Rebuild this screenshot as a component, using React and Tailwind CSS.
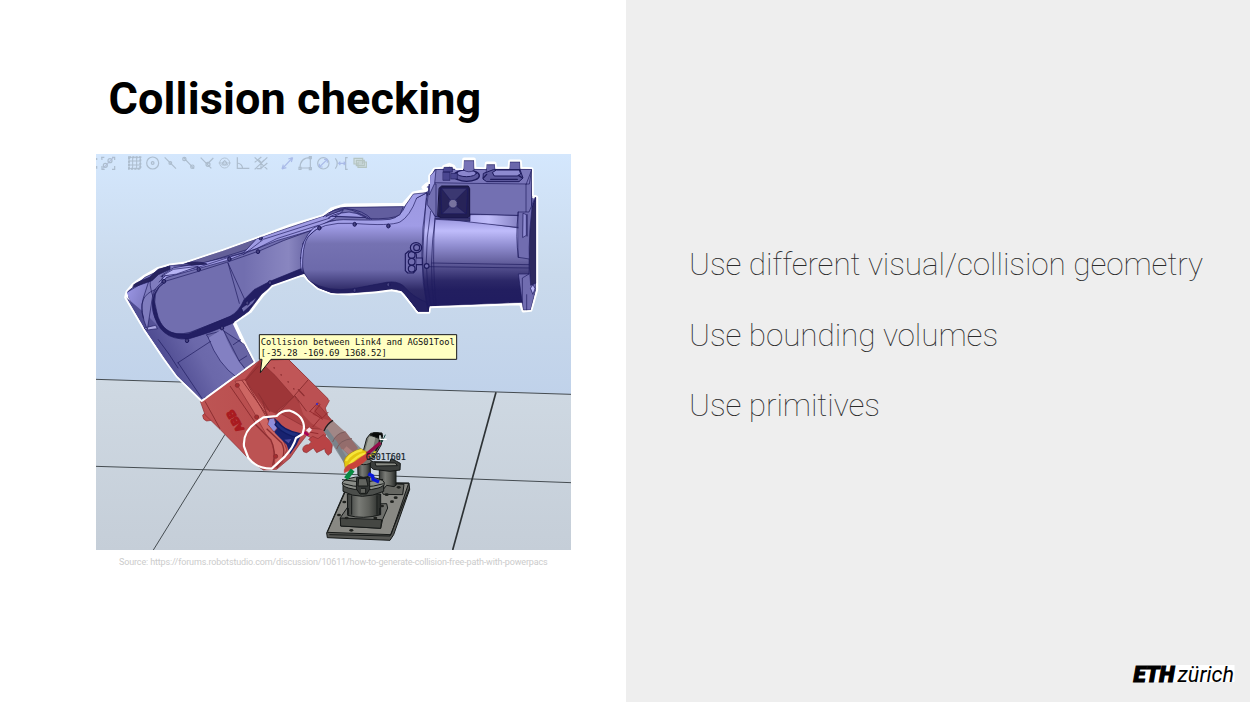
import React from "react";

const topics = [
  "Use different visual/collision geometry",
  "Use bounding volumes",
  "Use primitives",
];

const ARM =
  "M108 448 L112 432 L130 410 L165 385 L205 362 L240 352 L282 347 L400 308 L500 272 L600 234 L700 204 L724 184 L765 172 L940 170 L950 158 L970 136 L1005 128 L1010 124 L1000 118 L1012 108 L1020 108 L1020 84 L1034 64 L1060 62 L1062 56 L1078 50 L1090 55 L1096 66 L1120 66 L1122 34 L1152 34 L1154 62 L1188 64 L1190 46 L1214 46 L1216 62 L1258 62 L1260 40 L1290 40 L1292 62 L1325 63 L1326 144 L1339 148 L1339 425 L1322 486 L1300 488 L1292 466 L1018 475 L1016 492 L984 492 L974 478 L935 430 L905 424 L860 430 L780 437 L725 435 L685 420 L655 395 L641 378 L545 412 L518 440 L480 490 L432 522 L464 590 L491 642 L455 668 L335 756 L262 684 L222 630 L165 545 Z";

function Toolbar() {
  return (
    <g fill="none" stroke="#9dacbb" strokeWidth="3.5" opacity=".7">
      <path d="M20 30v6m0 18v8M36 36l-1-8h8M36 54v10h8M66 28h8v8M74 54v10h-8" />
      <path d="M38 62L70 29" stroke="#a9b3d2" />
      <circle cx="46" cy="52" r="6" /><circle cx="60" cy="38" r="6" />
      <path d="M117 28h34v34h-34zM128 28v34M140 28v34M117 39h34M117 51h34" strokeWidth="3" />
      <path d="M117 28h34v34h-34z" strokeWidth="6" strokeDasharray="6 4" />
      <circle cx="188" cy="45" r="18" /><circle cx="188" cy="45" r="4" />
      <path d="M224 28l34 34M280 28l32 34M332 29l32 32M352 48l18-18M442 28v33h36M442 45q14 2 16 16" />
      <circle cx="241" cy="45" r="4" /><circle cx="283" cy="33" r="5" /><circle cx="307" cy="56" r="5" /><circle cx="354" cy="49" r="6" />
      <g strokeWidth="2.5"><circle cx="404" cy="45" r="15" /><circle cx="404" cy="45" r="6" /><path d="M386 45h36M404 37l9 14h-18z" /></g>
      <path d="M494 28l38 36M532 28l-38 36M494 43l20-16M512 62l20-17M506 36l8 8 9-8M500 62h13v-10" />
      <path d="M576 63L608 29M576 63l4-13M576 63l13-4M608 29l-13 4M608 29l-4 13" stroke="#99a9e0" />
      <path d="M630 60q0-31 31-31v33M630 60h31" /><path d="M627 58h6v6h-6zM658 26h6v6h-6zM658 59h6v6h-6z" />
      <circle cx="700" cy="46" r="17" /><path d="M688 57l24-23M688 57v-10M688 57h10M712 34v10M712 34h-10" stroke="#99a9e0" />
      <path d="M736 31q12 15 0 31M773 29h-6v35h6" /><path d="M746 46h20m-15-5l-5 5 5 5m10-10l5 5-5 5" stroke="#99a9e0" />
      <path d="M792 31h26v17h-26zM799 37h24v16h-24zM804 42h25v16h-25z" fill="#d5e0e0" stroke="#a8b6a8" />
    </g>
  );
}

function Arm() {
  return (
    <g strokeLinejoin="round" strokeLinecap="round">
      <path d={ARM} fill="#716eaf" stroke="#fff" strokeWidth="11" />
      <clipPath id="armClip"><path d={ARM} /></clipPath>
      <g clipPath="url(#armClip)" stroke="#1e1b5d" strokeWidth="2">
        {/* lower link */}
        <path d="M108 430L185 390L260 560L335 630L350 756L262 690L165 545Z" fill="url(#elbow)" stroke="none" />
        <path d="M108 448L165 545L262 684L335 756L450 672L350 550L230 560L170 500Z" fill="url(#lowerLink)" stroke="none" />
        <path d="M350 560L400 548L464 590L491 642L444 690Z" fill="#6764a4" />
        <path d="M355 570Q385 650 440 688L470 672Q420 610 398 542Z" fill="#8380c2" stroke="none" />
        <path d="M264 644L362 580M264 644L335 750M355 570Q385 650 440 688M400 546L448 640L474 673M430 590L452 575M448 638L470 624M205 575Q240 620 264 660" fill="none" />
        <path d="M162 540l35-8 5 10-30 4z" fill="#aaa7e2" />
        {/* upper cover */}
        <path d="M112 432L165 388L240 352L346 342L230 388L190 430L172 545Q148 490 160 450L178 394Z" fill="#7f7cbe" />
        <path d="M130 408L178 388L206 362L240 354L240 364L205 380L186 398L130 418Z" fill="#28245f" />
        <path d="M180 390Q178 440 205 475M195 425Q140 445 160 510" fill="none" />
        <path d="M282 347L500 272L520 270L480 302L340 346Z" fill="#646099" />
        <path d="M340 344L460 315L500 272L700 204L760 187L735 210L662 248L560 278L410 338L230 388L215 405L218 380L250 360Z" fill="#a09ce4" />
        <path d="M460 320Q500 290 520 274L720 210M225 380L325 358L410 330L500 302L560 272L685 232M252 354L350 348M213 385l24-5M207 402l25-25" fill="none" />
        <path d="M286 344Q330 338 350 348L305 352Z" fill="#28245f" />
        <path d="M216 384L250 364L325 355L260 378Z" fill="#b7b4f4" />
        {/* forearm face */}
        <path d="M225 400L325 370L410 343L510 308L580 278L662 248L640 285L632 330L642 370L540 405L490 440L470 468L432 502L300 553Q215 575 190 495Q176 420 225 400Z" fill="url(#forearm)" />
        <path d="M225 402Q180 430 189 487Q205 578 295 573Q360 555 430 525L476 490L515 438L548 412L645 377L638 360L540 400L492 425L462 455Q448 490 420 505L295 557Q215 568 200 490Q180 430 225 402Z" fill="#231f63" />
        <path d="M414 345L448 466M414 345L463 452" fill="none" />
        <path d="M455 480L500 448L490 465L460 492Z" fill="#706dad" />
        {/* bulb housing */}
        <path d="M640 285Q660 248 725 218L900 218L940 210L970 155L1012 134L1018 490L984 490L935 425L900 410L850 412L740 437Q690 430 655 395Q622 355 640 285Z" fill="url(#bulb)" />
        <path d="M632 330Q632 278 670 240Q720 215 760 215Q860 218 900 214Q932 208 948 170L970 138L1010 134L980 150Q960 205 930 222Q900 235 790 226Q690 220 655 265Q635 290 638 375Q630 360 632 330Z" fill="#a3a0e8" />
        <path d="M708 205Q730 178 770 178L940 176L930 200Q910 215 830 212Q810 190 765 182Z" fill="#625e9f" />
        <path d="M700 206Q725 182 770 182Q820 186 845 214M715 210Q740 190 790 194Q825 200 838 213M720 205L820 208" fill="none" stroke="#332f77" strokeWidth="3" />
        <path d="M735 204Q775 178 825 208Z" fill="#9c98e1" />
        <path d="M655 398Q690 438 740 437L860 430L905 424Q935 424 950 445L984 490L1018 490L1018 466Q970 450 940 413Q920 398 890 403L790 422Q715 435 655 398Z" fill="#242061" />
        {/* cylinder */}
        <path d="M1010 135Q1000 250 998 340Q1000 430 1017 490L1018 475L1320 462L1320 230L1138 220L1035 205Z" fill="url(#cylinder)" />
        <path d="M1010 150Q980 330 1012 480M1022 190Q995 350 1023 475M1036 205Q1015 350 1032 472M1025 345L1322 350M1010 356L1322 360M1138 218L1300 242M1035 210Q1025 330 1038 470" fill="none" />
        <path d="M1040 206Q1140 195 1290 203L1300 240L1138 222Z" fill="url(#shine)" />
        {/* top box */}
        <path d="M1018 105L1034 64H1325V195L1285 202Q1200 200 1140 198V210L1036 205L1012 170Z" fill="#7370b2" />
        <path d="M1020 102L1036 64H1325L1318 108L1140 106L1030 104Z" fill="#7b77bb" />
        <path d="M1018 106L1038 108L1038 205M1308 110L1325 66M1325 66V195M1308 110V195" fill="none" />
        <path d="M1020 84L1038 64 L1034 106 L1018 140Z" fill="#9895dc" />
        <path d="M1048 120L1055 114H1135L1139 122V205L1130 210H1055L1044 204Z" fill="#211e52" stroke="#17143f" strokeWidth="3" />
        <path d="M1054 121L1132 121L1128 197H1056Z" fill="#3b3871" />
        <path d="M1054 121L1088 165L1056 197ZM1132 121L1088 165L1128 197Z" fill="#272358" />
        <circle cx="1089" cy="167" r="13" fill="#77739f" />
        <path d="M1038 210H1140V220L1038 214Z" fill="#3b3870" />
        <ellipse cx="1130" cy="83" rx="38" ry="17" fill="#5c589d" strokeWidth="4" />
        <ellipse cx="1130" cy="76" rx="29" ry="10" fill="#8b87ce" strokeWidth="3" />
        <path d="M1122 38h30v29q-15 9-30 0z" fill="#7773b7" />
        <path d="M1061 58h26v14h-26zM1060 72h20v25h-20zM1084 76h18v17h-18z" fill="#4a4690" />
        <path d="M1190 50h25v24h-25zM1260 42h30v23h-30z" fill="#6b67ab" />
        <path d="M1181 76L1210 65H1290L1299 90L1287 101H1190L1180 94Z" fill="#5c589d" strokeWidth="3" />
        <path d="M1208 73L1219 66H1288L1292 78L1282 84H1214Z" fill="#8e8ad0" strokeWidth="3" />
        <path d="M1190 79L1180 90M1202 94h80M1285 82l11 7" fill="none" stroke="#201c5c" strokeWidth="4" />
        {/* end flange */}
        <path d="M1285 192L1317 192L1337 145V425L1322 486H1300L1297 465L1285 378H1317L1318 333L1285 328Z" fill="#716db0" />
        <path d="M1311 200v64M1326 180L1337 150" fill="none" strokeWidth="3" />
        <path d="M1300 196L1309 200V262L1299 268Z" fill="#908cd2" />
        <path d="M1326 180Q1311 300 1322 412L1339 405V150Z" fill="#2d295f" />
        <path d="M1285 192Q1275 270 1286 328M1297 465V390L1317 378M1310 440V486" fill="none" />
        <path d="M1322 420l7-10 6 12-6 16z" fill="#b8b4f5" />
        {/* connectors */}
        <g fill="#716db0" strokeWidth="3.5">
          <path d="M946 318L956 309H974L979 320V365L970 375H953L946 368Z" />
          <circle cx="965" cy="321" r="10" /><circle cx="965" cy="341" r="10" /><circle cx="965" cy="362" r="10" />
          <ellipse cx="978" cy="299" rx="17" ry="15" /><circle cx="980" cy="299" r="9" />
          <path d="M979 330h18v20h-18" /><circle cx="1010" cy="354" r="7" />
        </g>
        {[[688,240],[794,229],[895,234],[895,410],[794,427],[504,311],[418,333],[326,364],[222,400],[540,404],[472,465],[396,540],[291,578],[512,270]].map(([x, y]) => (
          <ellipse key={`${x}-${y}`} cx={x} cy={y} rx="5" ry="6" fill="#46427f" strokeWidth="3" />
        ))}
      </g>
    </g>
  );
}

function RedLink() {
  return (
    <g stroke="#8d2e31" strokeWidth="2" strokeLinejoin="round">
      <path d="M338 802Q340 794 352 797L362 790L382 808L372 816L350 819Q338 816 338 802Z" fill="#c04b4b" />
      <path d="M331 760L450 680L508 638L530 634L595 634L718 758L706 780L712 800L700 812L728 832L704 866L680 880L650 862L628 890L600 930L560 964L520 966L485 942L450 905L390 844L345 800Z" fill="#bd5052" />
      <path d="M462 697L508 638L565 672L614 740L565 800L530 785Z" fill="#9e3638" stroke="none" />
      <path d="M508 638L595 634L714 752L698 770L680 756L650 808L610 745L555 682Z" fill="#c05657" />
      <path d="M614 745L650 795L665 762L690 775L704 792L728 820L700 844L650 840L560 790Z" fill="#ac4143" />
      <path d="M620 742L654 696L716 758L706 776L680 768L668 800L700 812L728 820L704 850L664 826L640 800Z" fill="#bb5052" stroke="none" />
      <path d="M614 742L654 696M614 742L560 800M614 742L650 790" fill="none" strokeWidth="3" />
      <path d="M333 764L435 700L510 800L535 842L470 905L400 850Z" fill="url(#redBody)" stroke="none" />
      <path d="M435 700L465 695L525 785L540 815L570 850L590 905L575 946L552 960Q560 910 540 880L490 790Z" fill="#cd6663" />
      <path d="M420 714L500 830M455 696L540 814L575 858M470 704L525 800L562 838M345 760L390 842M466 698L505 655" fill="none" strokeWidth="3" />
      <path d="M505 736L540 792M518 760L535 818L570 842" fill="none" strokeWidth="3" />
      <path d="M462 895Q466 845 505 825Q530 860 545 885Q556 950 530 962Q485 950 462 895Z" fill="#bc5353" stroke="none" />
      <path d="M495 828L542 875Q560 910 548 952M530 842L575 885Q593 920 560 960" fill="none" strokeWidth="4" />
      {/* blue joint in the gap */}
      <path d="M532 810L555 811L595 852L632 864L620 890L600 919L590 890L555 855Z" fill="#18226f" stroke="none" />
      <path d="M538 812L552 810L562 840L552 852L533 829Z" fill="#8f8dda" />
      <path d="M562 820Q580 847 630 857Q620 872 600 862Q570 850 555 830Z" fill="#202f7f" stroke="#111b65" strokeWidth="4" />
      <path d="M583 875L604 873L596 886" fill="#4a4aa0" stroke="none" />
      {/* wrist clamp */}
      <path d="M638 904Q640 890 656 890L664 882L656 874L668 865L684 872L700 860L728 884L724 914L714 922L706 912L704 902L680 914L670 900L650 914Q638 914 638 904Z" fill="#b94345" />
      <path d="M658 792L684 764L690 770L675 790L697 810L715 792M660 790l38 24m-8-3l-22 26m-17 14l34 6" fill="none" stroke="#962b2f" strokeWidth="3" />
      <path d="M625 725l17 18m-90-84l1 1m20 20l1 1m20 20l1 1m16 20l1 1" fill="none" strokeLinecap="round" strokeWidth="4" />
      <path d="M648 847l10-9 8 7-9 10z" fill="#f6dfea" stroke="none" />
      <path d="M643 852l12 10" stroke="#a60057" strokeWidth="8" />
      <circle cx="681" cy="768" r="3" fill="#262adc" stroke="none" />
      <g fill="#a62d2f" strokeWidth="3"><circle cx="442" cy="712" r="6" /><circle cx="500" cy="807" r="6" /><circle cx="557" cy="925" r="6" /></g>
      <text transform="translate(463 844) rotate(-120)" x="0" y="0" textLength="70" lengthAdjust="spacingAndGlyphs" fill="#c41a1f" stroke="#a81b20" strokeWidth="4" fontFamily="Liberation Sans, sans-serif" fontWeight="700" fontSize="34">ABB</text>
      <path d="M462 895Q458 850 500 822L520 808L560 804Q575 786 600 788Q642 802 642 840L638 858L618 870Q610 898 585 925L545 962Q500 962 475 930Z" fill="none" stroke="#fff" strokeWidth="6.5" />
    </g>
  );
}

function Fixture() {
  return (
    <g stroke="#171a19" strokeWidth="3" strokeLinejoin="round">
      <path d="M710 1155L775 1005L890 1004L957 1005L959 1024L911 1160L900 1177L712 1169Z" fill="#555653" />
      <path d="M712 1153L776 1008L956 1006L903 1160Z" fill="#888883" />
      <path d="M718 1160L900 1164L958 1022" fill="none" />
      <path d="M751 1109L778 1070L890 1067L893 1080L878 1114L872 1141L752 1134Z" fill="#6e6f6b" />
      <path d="M751 1110L875 1115L872 1141L752 1134Z" fill="#454743" />
      <path d="M868 965L918 965L918 1028L890 1025L868 1018Z" fill="url(#metal)" />
      <path d="M875 1030L890 1012L912 1016L922 1008L942 1009L938 1040L880 1039Z" fill="#666762" />
      <path d="M830 935L850 941L900 942L903 932L920 940L931 946L930 966L900 970L850 964L835 950Z" fill="#3b3e3c" />
      <path d="M855 944L916 945L922 953L858 954Z" fill="#8a8c85" />
      <path d="M772 1038L872 1038V1100Q820 1115 773 1102Z" fill="url(#metal)" />
      <path d="M785 1042V1100M861 1042V1100M775 1080v20M869 1080v20" fill="none" />
      <path d="M759 1003V1030Q814 1060 881 1030V1003Z" fill="#4b4e4b" />
      <ellipse cx="820" cy="1006" rx="63" ry="20" fill="#8a8d88" />
      <path d="M760 1007Q820 1026 881 1007M820 1003L756 995M820 1003L879 994" fill="none" />
      <path d="M800 989L839 989V1023L830 1038H810L799 1023Z" fill="#343735" />
      <path d="M806 992h23l5 22h-30zM813 1021h14v15h-14" fill="#62645f" />
      <path d="M803 947L841 945V982Q820 994 804 982Z" fill="url(#metal)" />
      <ellipse cx="821" cy="940" rx="23" ry="10" fill="#73766f" />
      <path d="M817 920L830 871L842 856L863 854L878 861L874 890L851 930L829 935Z" fill="#747770" />
      <path d="M837 866L857 865L847 910L830 929L822 919Z" fill="#a2a59c" stroke="none" />
      <path d="M840 861L851 854L876 855L877 865L866 871Z" fill="#070808" />
      <path d="M869 869L868 890L846 926" fill="none" strokeWidth="5" />
      <g fill="#20221f" stroke="none">
        {[[763,1062],[747,1101],[784,1147],[906,1061],[917,1049],[876,1074],[890,1040],[856,1110],[770,1110],[926,1018]].map(([x, y]) => <ellipse key={`${x}-${y}`} cx={x} cy={y} rx="6" ry="4" />)}
      </g>
    </g>
  );
}

function Gripper() {
  return (
    <g strokeLinejoin="round">
      <path d="M728 818L816 904L764 948L702 850Q708 826 728 818Z" fill="#89939a" />
      <path d="M728 818Q708 826 702 850L728 886Q738 856 766 852Z" fill="#a18786" />
      <path d="M728 886Q734 856 766 850L786 876L804 900L782 926L758 904L742 906Z" fill="#946d6c" />
      <path d="M702 850L742 906L764 948L776 938L740 880L712 842Z" fill="#79838b" />
      <path d="M740 903Q748 876 786 872M728 882Q738 856 764 852" fill="none" stroke="#7b5b5c" strokeWidth="3" />
      <path d="M702 849Q710 828 729 817" fill="none" stroke="#241c1e" strokeWidth="4" />
      <path d="M765 900L786 918" stroke="#ad7f7c" strokeWidth="14" />
      <path d="M762 940Q766 916 812 902L832 912Q835 937 790 962L767 969Z" fill="#e2c510" stroke="#a58619" strokeWidth="2" />
      <path d="M768 939Q782 914 816 906M778 950Q799 922 826 917" fill="none" stroke="#f6e53a" strokeWidth="7" />
      <path d="M763 974Q758 956 792 943Q826 918 842 910Q844 932 802 956Z" fill="#c9423b" stroke="#cc4842" strokeWidth="2" />
      <path d="M831 918L871 884" stroke="#940b4a" strokeWidth="10" />
      <path d="M840 926L857 910" stroke="#ebd829" strokeWidth="5" />
      <path d="M788 966L768 992" stroke="#078a41" strokeWidth="14" />
      <path d="M835 977L848 984L849 994L867 1002" fill="none" stroke="#0816db" strokeWidth="10" />
      <path d="M870 864L876 882L886 860" fill="none" stroke="#194d45" strokeWidth="3" />
      <path d="M870 862V874H890" fill="none" stroke="#fff" strokeWidth="4" />
      <text x="827" y="936" textLength="120" lengthAdjust="spacingAndGlyphs" fill="#17242d" stroke="#17242d" strokeWidth=".7" fontFamily="DejaVu Sans Mono, monospace" fontSize="25">GS01T601</text>
    </g>
  );
}

function RobotScene() {
  return (
    <svg className="block h-[396px] w-[475px]" viewBox="18 18 1425 1188" role="img">
      <defs>
        <linearGradient id="sky" x2="0" y2="1"><stop stopColor="#d4e7fd" /><stop offset=".5" stopColor="#cadaec" /><stop offset="1" stopColor="#c0d2ea" /></linearGradient>
        <linearGradient id="floor" x2="0" y2="1"><stop stopColor="#cfd9e3" /><stop offset="1" stopColor="#c5ced8" /></linearGradient>
        <linearGradient id="cylinder" x2="0" y2="1"><stop stopColor="#8985cc" /><stop offset=".22" stopColor="#9a96de" /><stop offset=".32" stopColor="#bfbcfb" /><stop offset=".44" stopColor="#9390d3" /><stop offset=".58" stopColor="#65619f" /><stop offset=".74" stopColor="#2c2868" /><stop offset=".82" stopColor="#221e60" /><stop offset="1" stopColor="#201c60" /></linearGradient>
        <linearGradient id="bulb" x2="0" y2="1"><stop stopColor="#9c98e0" /><stop offset=".28" stopColor="#a09ce6" /><stop offset=".43" stopColor="#7572b2" /><stop offset=".65" stopColor="#6d6aab" /><stop offset=".82" stopColor="#2e2a67" /><stop offset="1" stopColor="#211e5d" /></linearGradient>
        <linearGradient id="forearm"><stop stopColor="#716eaf" /><stop offset=".58" stopColor="#716eaf" /><stop offset=".78" stopColor="#8380bc" /><stop offset=".86" stopColor="#8986c0" /><stop offset="1" stopColor="#6562a2" /></linearGradient>
        <linearGradient id="elbow" x2="1" y2=".6"><stop stopColor="#9f9bea" /><stop offset=".4" stopColor="#6e6aae" /><stop offset="1" stopColor="#484484" /></linearGradient>
        <linearGradient id="lowerLink" x2="1" y2="-.5"><stop stopColor="#4d4a90" /><stop offset=".3" stopColor="#6b68aa" /><stop offset=".65" stopColor="#7471b3" /><stop offset="1" stopColor="#6965a6" /></linearGradient>
        <linearGradient id="shine"><stop stopColor="#9994df" /><stop offset=".6" stopColor="#c0bdfa" /><stop offset="1" stopColor="#7b77ba" /></linearGradient>
        <linearGradient id="redBody"><stop stopColor="#bd5554" /><stop offset="1" stopColor="#b94d4e" /></linearGradient>
        <linearGradient id="metal"><stop stopColor="#373a38" /><stop offset=".35" stopColor="#797b76" /><stop offset=".65" stopColor="#5e605b" /><stop offset="1" stopColor="#242725" /></linearGradient>
      </defs>
      <path d="M18 18H1443V740H18Z" fill="url(#sky)" />
      <path d="M18 694L1443 739V1206H18Z" fill="url(#floor)" />
      <g fill="none" stroke="#454c51" strokeWidth="3"><path d="M18 694L1443 739M18 955L690 976L1443 1004M190 1206L405 859" /><path d="M1218 733L1088 1206" stroke="#2d3235" strokeWidth="5" /></g>
      <Toolbar />
      <RedLink />
      <Arm />
      <Fixture />
      <Gripper />
      <path d="M508 560H1100V634H543L511 674L516 634H508Z" fill="#ffffc2" stroke="#171719" strokeWidth="3" />
      <g fill="#111" fontFamily="DejaVu Sans Mono, monospace" fontSize="26">
        <text x="512" y="590" textLength="582" lengthAdjust="spacingAndGlyphs">Collision between Link4 and AGS01Tool</text>
        <text x="512" y="623" textLength="378" lengthAdjust="spacingAndGlyphs">[-35.28 -169.69 1368.52]</text>
      </g>
    </svg>
  );
}

export default function App() {
  return (
    <main className="flex h-[702px] w-[1250px] overflow-hidden bg-white font-[Roboto,sans-serif]">
      <section className="w-[626px] pt-[72px]">
        <h1 className="ml-[108.5px] h-[82px] whitespace-nowrap text-[45px] leading-[54px] font-bold tracking-[0.12px] text-black">Collision checking</h1>
        <figure className="ml-24 w-[475px]">
          <RobotScene />
          <figcaption className="ml-[23px] pt-[5px] text-[9px] leading-[14px] tracking-[-0.142px] whitespace-nowrap text-[#cbcbcb]">Source: https://forums.robotstudio.com/discussion/10611/how-to-generate-collision-free-path-with-powerpacs</figcaption>
        </figure>
      </section>
      <section className="flex w-[624px] flex-col bg-[#eeeeee] pt-[245px]">
        <ul className="ml-[63px] flex flex-col gap-[30.5px] text-[31.5px] leading-[40px] font-thin tracking-[-0.08px] whitespace-nowrap text-[#2b2b2b]">
          {topics.map((topic) => <li key={topic}>{topic}</li>)}
        </ul>
        <div className="mt-auto mr-[11px] mb-[13px] ml-auto">
          <svg className="block h-[28px] w-[112px]" viewBox="1127 661 112 28" aria-label="ETH zürich">
            <path d="M1136 665H1234.500V682H1133Z" fill="#fff" />
            <text x="1133.500" y="681.500" fontSize="21.500" fontWeight="900" fontStyle="italic" stroke="#000" strokeWidth="1.200" textLength="41" lengthAdjust="spacingAndGlyphs">ETH</text>
            <text x="1177.500" y="682" fontSize="21.500" fontWeight="400" fontStyle="italic" textLength="56.500">zürich</text>
          </svg>
        </div>
      </section>
    </main>
  );
}
